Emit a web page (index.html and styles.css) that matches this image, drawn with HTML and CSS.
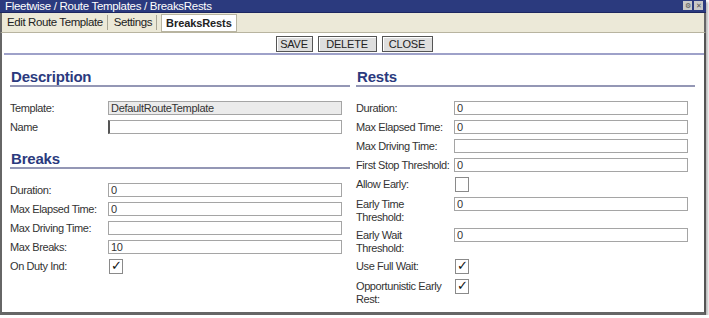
FILE: index.html
```html
<!DOCTYPE html>
<html lang="en">
<head>
    <meta charset="UTF-8">
    <title>Fleetwise / Route Templates / BreaksRests</title>
    <link rel="stylesheet" href="styles.css">
</head>
<body>
    <div class="window">
        <div class="titlebar">
            <span>Fleetwise / Route Templates / BreaksRests</span>
            <div class="title-icons">
                <span class="ticon">&#9881;</span>
                <span class="ticon">&#10005;</span>
            </div>
        </div>

        <div class="tabs">
            <span class="tab">Edit Route Template</span>
            <span class="tab">Settings</span>
            <span class="tab active">BreaksRests</span>
        </div>

        <div class="content">
            <div class="toolbar">
                <button class="save">SAVE</button>
                <button class="delete">DELETE</button>
                <button class="close">CLOSE</button>
            </div>

            <div class="columns">
                <div class="col left">
                    <h2>Description</h2>
                    <div class="form">
                        <label>Template:</label>
                        <input type="text" class="readonly" value="DefaultRouteTemplate" readonly>
                        <label>Name</label>
                        <input type="text" class="caret" value="">
                    </div>

                    <h2 class="second">Breaks</h2>
                    <div class="form">
                        <label>Duration:</label>
                        <input type="text" value="0">
                        <label>Max Elapsed Time:</label>
                        <input type="text" value="0">
                        <label>Max Driving Time:</label>
                        <input type="text" value="">
                        <label>Max Breaks:</label>
                        <input type="text" value="10">
                        <label>On Duty Ind:</label>
                        <span class="check on"></span>
                    </div>
                </div>

                <div class="col right">
                    <h2>Rests</h2>
                    <div class="form">
                        <label>Duration:</label>
                        <input type="text" value="0">
                        <label>Max Elapsed Time:</label>
                        <input type="text" value="0">
                        <label>Max Driving Time:</label>
                        <input type="text" value="">
                        <label>First Stop Threshold:</label>
                        <input type="text" value="0">
                        <label>Allow Early:</label>
                        <span class="check"></span>
                        <label>Early Time<br>Threshold:</label>
                        <input type="text" value="0">
                        <label>Early Wait<br>Threshold:</label>
                        <input type="text" value="0">
                        <label>Use Full Wait:</label>
                        <span class="check on"></span>
                        <label>Opportunistic Early<br>Rest:</label>
                        <span class="check on"></span>
                    </div>
                </div>
            </div>
        </div>
    </div>
</body>
</html>
```

FILE: styles.css
```css
body {
    margin: 0;
    font-family: "Liberation Sans", Arial, sans-serif;
    background: #ffffff;
}
.window {
    width: 706px;
    height: 315px;
    display: flex;
    flex-direction: column;
    box-shadow: 2px 2px 2px #bbbbbb;
}
.titlebar {
    height: 12px;
    background: #2b3a7e;
    color: #ffffff;
    font-size: 11.5px;
    letter-spacing: -0.3px;
    line-height: 12px;
    padding-left: 5px;
    display: flex;
    justify-content: space-between;
    border-bottom: 1px solid #1d2660;
}
.title-icons {
    display: flex;
    gap: 2px;
    padding-right: 3px;
    padding-top: 1px;
    letter-spacing: 0;
}
.ticon {
    width: 9px;
    height: 9px;
    background: #c8c8c8;
    color: #555555;
    font-size: 7px;
    line-height: 9px;
    text-align: center;
}
.tabs {
    height: 19px;
    background: #ece9d8;
    border-left: 2px solid #666666;
    border-right: 2px solid #666666;
    border-bottom: 1px solid #b8b4a0;
    display: flex;
    align-items: center;
    padding-left: 3px;
    font-size: 11.5px;
    letter-spacing: -0.4px;
    color: #222222;
}
.tab {
    padding: 0 4px 0 2px;
    border-right: 1px solid #a8a595;
    margin-right: 4px;
    line-height: 15px;
}
.tab.active {
    background: #ffffff;
    border: 1px solid #b8b4a0;
    font-weight: bold;
    padding: 0 4px 0 4px;
    letter-spacing: -0.1px;
    font-size: 11px;
    line-height: 16px;
}
.content {
    flex: 1;
    background: #ffffff;
    border-left: 2px solid #666666;
    border-right: 2px solid #555555;
    border-bottom: 3px solid #666666;
}
.toolbar {
    display: flex;
    justify-content: center;
    gap: 5px;
    padding: 3px 0 1px 0;
    border-bottom: 2px solid #9ea1c9;
    margin-left: 2px;
}
.toolbar button {
    font-family: "Liberation Sans", Arial, sans-serif;
    font-size: 11px;
    letter-spacing: -0.2px;
    height: 16px;
    padding: 0;
    background: #dedede;
    border: 1px solid #555555;
    box-shadow: inset 1px 1px 0 #ffffff;
    color: #222222;
    line-height: 14px;
}
.toolbar .save {
    width: 37px;
}
.toolbar .delete {
    width: 59px;
}
.toolbar .close {
    width: 51px;
}
.columns {
    display: flex;
    gap: 6px;
    padding: 14px 0 0 8px;
}
.col.left {
    width: 340px;
}
.col.right {
    width: 339px;
}
h2 {
    margin: 0;
    font-size: 15px;
    color: #2b3a7e;
    padding-left: 1px;
    line-height: 16px;
    letter-spacing: -0.2px;
    border-bottom: 2px solid #9497b5;
}
h2.second {
    margin-top: 17px;
}
.form {
    display: grid;
    grid-template-columns: 98px 234px;
    row-gap: 5px;
    padding-top: 14px;
    font-size: 11px;
    letter-spacing: -0.4px;
    color: #333333;
}
.form label {
    line-height: 12.5px;
    padding-top: 1px;
}
.form input {
    box-sizing: border-box;
    height: 14px;
    width: 234px;
    margin: 0;
    padding: 0 2px;
    border: 1px solid #a5a5a5;
    font-family: "Liberation Sans", Arial, sans-serif;
    font-size: 11px;
    letter-spacing: -0.3px;
    color: #333333;
}
.form input.readonly {
    background: #ebebeb;
}
.form input.caret {
    border-left: 2px solid #555555;
}
.check {
    width: 12px;
    height: 13px;
    border: 1px solid #8a8a8a;
    position: relative;
    margin-left: 1px;
}
.check.on::after {
    content: "\2713";
    position: absolute;
    left: 1px;
    top: -2px;
    font-size: 13px;
    color: #111111;
    font-family: "DejaVu Sans", sans-serif;
}
```
